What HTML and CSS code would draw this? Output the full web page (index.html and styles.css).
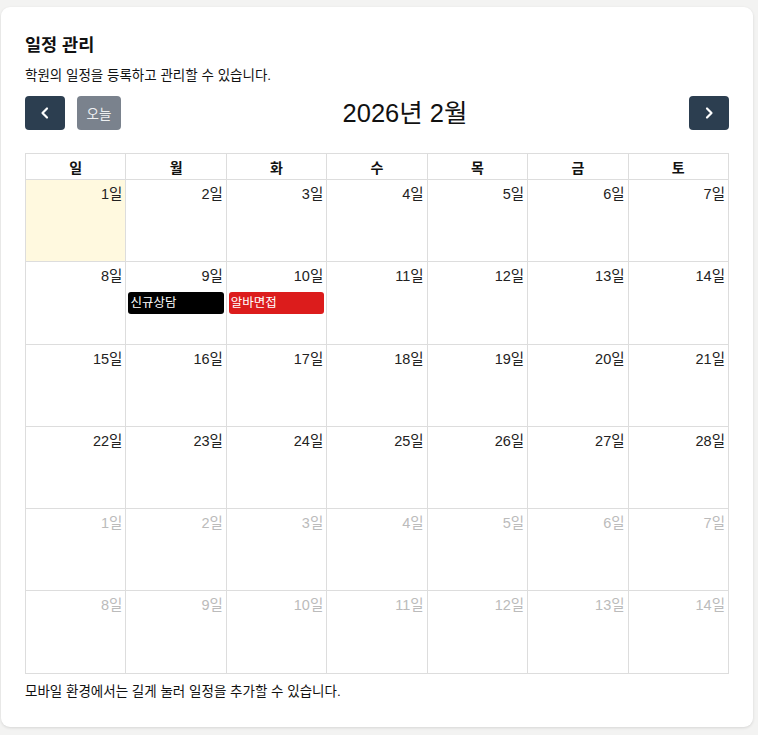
FILE: index.html
```html
<!DOCTYPE html>
<html lang="ko">
<head>
<meta charset="utf-8">
<link rel="stylesheet" href="styles.css">
</head>
<body>
<div class="card">
  <h1 class="title">일정 관리</h1>
  <p class="subtitle">학원의 일정을 등록하고 관리할 수 있습니다.</p>
  <div class="toolbar">
    <div class="chunk">
      <button class="btn btn-icon" aria-label="prev">
        <svg width="14" height="14" viewBox="0 0 14 14"><path d="M9 2.5 L4.5 7 L9 11.5" fill="none" stroke="#fff" stroke-width="2.2" stroke-linecap="round" stroke-linejoin="round"/></svg>
      </button>
      <button class="btn btn-today">오늘</button>
    </div>
    <h2 class="cal-title">2026년 2월</h2>
    <div class="chunk">
      <button class="btn btn-icon" aria-label="next">
        <svg width="14" height="14" viewBox="0 0 14 14"><path d="M5 2.5 L9.5 7 L5 11.5" fill="none" stroke="#fff" stroke-width="2.2" stroke-linecap="round" stroke-linejoin="round"/></svg>
      </button>
    </div>
  </div>
  <table class="cal">
    <thead>
      <tr><th>일</th><th>월</th><th>화</th><th>수</th><th>목</th><th>금</th><th>토</th></tr>
    </thead>
    <tbody>
      <tr>
        <td class="today"><div class="num">1일</div></td>
        <td><div class="num">2일</div></td>
        <td><div class="num">3일</div></td>
        <td><div class="num">4일</div></td>
        <td><div class="num">5일</div></td>
        <td><div class="num">6일</div></td>
        <td><div class="num">7일</div></td>
      </tr>
      <tr>
        <td><div class="num">8일</div></td>
        <td><div class="num">9일</div><div class="event ev-black">신규상담</div></td>
        <td><div class="num">10일</div><div class="event ev-red">알바면접</div></td>
        <td><div class="num">11일</div></td>
        <td><div class="num">12일</div></td>
        <td><div class="num">13일</div></td>
        <td><div class="num">14일</div></td>
      </tr>
      <tr>
        <td><div class="num">15일</div></td>
        <td><div class="num">16일</div></td>
        <td><div class="num">17일</div></td>
        <td><div class="num">18일</div></td>
        <td><div class="num">19일</div></td>
        <td><div class="num">20일</div></td>
        <td><div class="num">21일</div></td>
      </tr>
      <tr>
        <td><div class="num">22일</div></td>
        <td><div class="num">23일</div></td>
        <td><div class="num">24일</div></td>
        <td><div class="num">25일</div></td>
        <td><div class="num">26일</div></td>
        <td><div class="num">27일</div></td>
        <td><div class="num">28일</div></td>
      </tr>
      <tr class="other">
        <td><div class="num">1일</div></td>
        <td><div class="num">2일</div></td>
        <td><div class="num">3일</div></td>
        <td><div class="num">4일</div></td>
        <td><div class="num">5일</div></td>
        <td><div class="num">6일</div></td>
        <td><div class="num">7일</div></td>
      </tr>
      <tr class="other">
        <td><div class="num">8일</div></td>
        <td><div class="num">9일</div></td>
        <td><div class="num">10일</div></td>
        <td><div class="num">11일</div></td>
        <td><div class="num">12일</div></td>
        <td><div class="num">13일</div></td>
        <td><div class="num">14일</div></td>
      </tr>
    </tbody>
  </table>
  <p class="footnote">모바일 환경에서는 길게 눌러 일정을 추가할 수 있습니다.</p>
</div>
</body>
</html>
```

FILE: styles.css
```css
html, body {
  margin: 0;
  padding: 0;
  background: #f3f3f2;
}
body {
  font-family: "Liberation Sans", "Noto Sans CJK KR", sans-serif;
  color: #111;
}
.card {
  margin: 7px 5px 9px 1px;
  background: #fff;
  border-radius: 9px;
  box-shadow: 0 1px 3px rgba(0,0,0,0.12);
  padding: 24px 24px 25px 24px;
}
.title {
  margin: 0;
  font-size: 17.5px;
  line-height: 28px;
  font-weight: 700;
}
.subtitle {
  margin: 7px 0 0 0;
  font-size: 13.5px;
  line-height: 20px;
}
.toolbar {
  margin-top: 10px;
  display: flex;
  justify-content: space-between;
  align-items: center;
  height: 34px;
  margin-bottom: 23px;
}
.chunk {
  display: flex;
  gap: 12px;
  align-items: center;
}
.btn {
  border: 0;
  border-radius: 4px;
  height: 34px;
  color: #fff;
  font-family: inherit;
  padding: 0;
  display: flex;
  align-items: center;
  justify-content: center;
}
.btn-icon {
  width: 40px;
  background: #2c3e50;
}
.btn-today {
  width: 44px;
  background: #7a828d;
  font-size: 13.5px;
  color: #eef0f2;
}
.cal-title {
  margin: 0;
  font-size: 25.5px;
  font-weight: 400;
  line-height: 34px;
}
.cal {
  width: 100%;
  border-collapse: collapse;
  table-layout: fixed;
}
.cal th {
  border: 1px solid #ddd;
  height: 25px;
  padding: 0;
  font-size: 14px;
  font-weight: 700;
  text-align: center;
  vertical-align: middle;
}
.cal td {
  border: 1px solid #ddd;
  height: 81.3px;
  padding: 0;
  vertical-align: top;
}
.cal td.today {
  background: #fff9df;
}
.num {
  text-align: right;
  font-size: 14.5px;
  line-height: 20px;
  padding: 4px 3px 0 0;
  color: #222;
}
.other .num {
  color: #bbb;
}
.event {
  margin: 6px 2px 0 2px;
  height: 22px;
  line-height: 22px;
  border-radius: 3px;
  color: #fff;
  font-size: 12.5px;
  padding-left: 2px;
}
.ev-black { background: #000; }
.ev-red { background: #dc1c1c; }
.footnote {
  margin: 8px 0 0 0;
  font-size: 13.5px;
  line-height: 20px;
  color: #111;
}
```
